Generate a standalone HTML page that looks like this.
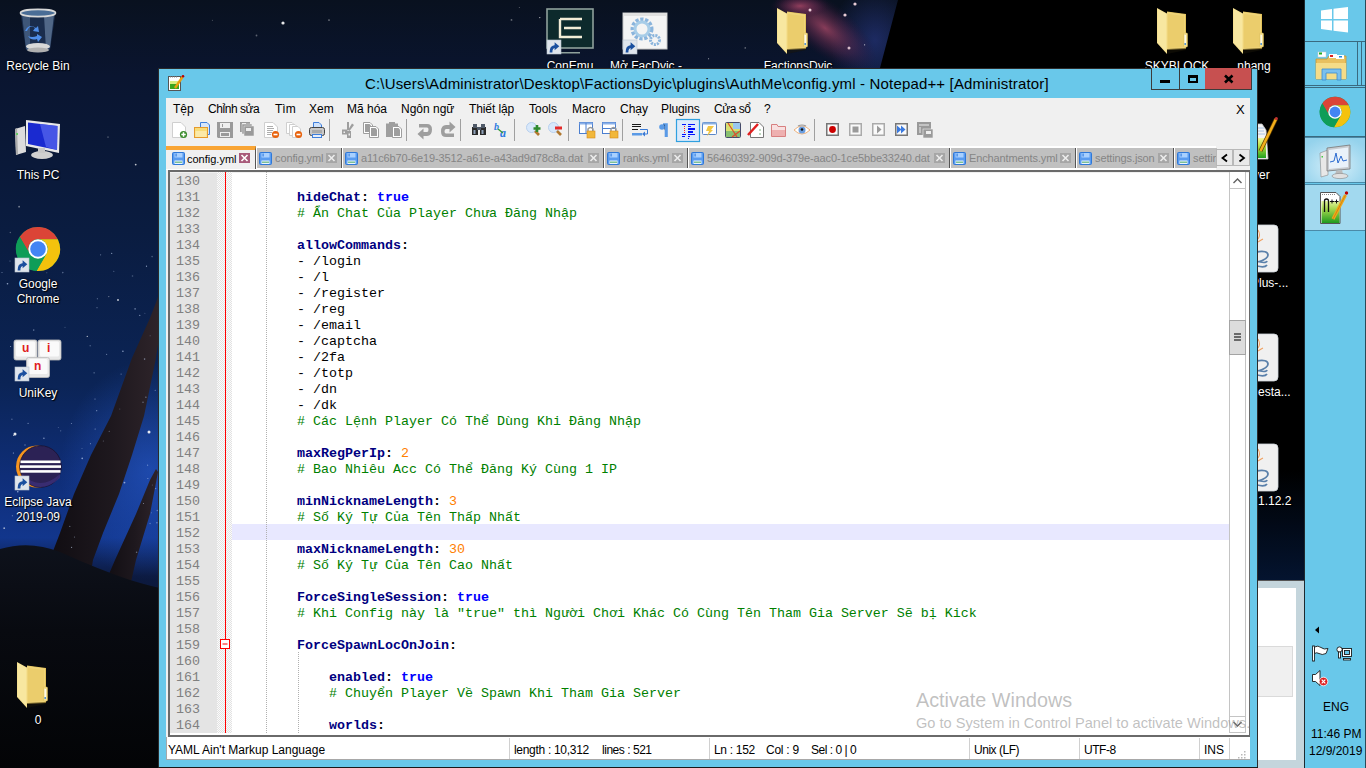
<!DOCTYPE html><html><head><meta charset="utf-8"><title>Notepad++</title><style>
*{box-sizing:border-box}
html,body{margin:0;padding:0}
body{width:1366px;height:768px;overflow:hidden;position:relative;background:#050a14;font-family:"Liberation Sans",sans-serif}
svg{position:absolute;left:0;top:0;overflow:visible}
.lbl{position:absolute;color:#fff;font-size:12px;line-height:15px;text-align:center;text-shadow:0 0 2px #000,1px 1px 1px #000;white-space:pre}
.mn{position:absolute;top:102px;font-size:12px;line-height:15px;color:#000;white-space:pre}
.ln{position:absolute;left:170px;width:47px;height:16px;font-family:"Liberation Mono",monospace;font-size:13.33px;line-height:16px;color:#808080;padding-left:6px;padding-top:2px;white-space:pre}
.cd{position:absolute;left:233px;height:16px;font-family:"Liberation Mono",monospace;font-size:13.33px;line-height:16px;color:#000;padding-top:2px;white-space:pre}
.k{color:#000080;font-weight:bold}
.o{color:#000;font-weight:bold}
.t{color:#0000ff;font-weight:bold}
.c{color:#008000}
.n{color:#ff8000}
.tab{position:absolute;top:148px;height:20px;background:#c0c0c0;border-right:1px solid #555;overflow:hidden}
.tabt{position:absolute;top:3px;font-size:11px;line-height:14px;color:#858585;white-space:pre;letter-spacing:-0.12px}
.sb{position:absolute;top:743px;font-size:12px;line-height:15px;color:#000;white-space:pre}
.sbd{position:absolute;top:738px;width:1px;height:21px;background:#d0d0d0}

</style></head><body>
<svg width="1366" height="768" viewBox="0 0 1366 768"><defs><linearGradient id="sky" x1="0" y1="0" x2="0" y2="768" gradientUnits="userSpaceOnUse"><stop offset="0" stop-color="#09111f"/><stop offset="0.1" stop-color="#0a1530"/><stop offset="0.3" stop-color="#0a1c40"/><stop offset="0.5" stop-color="#0b2456"/><stop offset="0.62" stop-color="#0f2e78"/><stop offset="0.7" stop-color="#12368c"/><stop offset="0.75" stop-color="#0c1a40"/><stop offset="1" stop-color="#04060a"/></linearGradient><radialGradient id="glow" cx="0.5" cy="0.5" r="0.5"><stop offset="0" stop-color="#2a60d8" stop-opacity="0.55"/><stop offset="1" stop-color="#2a60d8" stop-opacity="0"/></radialGradient><radialGradient id="neb" cx="0.5" cy="0.5" r="0.5"><stop offset="0" stop-color="#b04a6a" stop-opacity="0.75"/><stop offset="0.6" stop-color="#6a2a50" stop-opacity="0.35"/><stop offset="1" stop-color="#301030" stop-opacity="0"/></radialGradient><linearGradient id="rock" x1="0" y1="0" x2="1" y2="0"><stop offset="0" stop-color="#0e0b10"/><stop offset="0.6" stop-color="#1e181e"/><stop offset="1" stop-color="#2e242a"/></linearGradient><linearGradient id="gnd" x1="0" y1="540" x2="0" y2="768" gradientUnits="userSpaceOnUse"><stop offset="0" stop-color="#0e121c"/><stop offset="0.4" stop-color="#080a10"/><stop offset="1" stop-color="#030406"/></linearGradient></defs><rect x="0" y="0" width="1366" height="768" fill="url(#sky)"/><ellipse cx="150" cy="470" rx="90" ry="110" fill="url(#glow)"/><radialGradient id="bh" cx="0.5" cy="0.5" r="0.5"><stop offset="0" stop-color="#2a3a88" stop-opacity="0.6"/><stop offset="1" stop-color="#2a3a88" stop-opacity="0"/></radialGradient><ellipse cx="875" cy="40" rx="45" ry="55" fill="url(#bh)"/><ellipse cx="825" cy="28" rx="62" ry="26" transform="rotate(38 825 28)" fill="url(#neb)"/><ellipse cx="800" cy="6" rx="30" ry="12" fill="url(#neb)"/><path d="M898 0 L1366 0 L1366 768 L878 768 L878 68 L880 68 Z" fill="#000"/><linearGradient id="nv" x1="0" y1="0" x2="0" y2="1"><stop offset="0" stop-color="#000"/><stop offset="1" stop-color="#041430"/></linearGradient><rect x="1256" y="470" width="50" height="112" fill="url(#nv)"/><path d="M40 585 L60 533 L74 494 L91 455 L111 416 L132 358 L150 318 L157 300 L160 290 L160 330 L156 358 L144 416 L132 455 L119 494 L103 533 L93 560 L88 590 Z" fill="url(#rock)"/><path d="M100 595 L115 560 L136 514 L150 480 L156 469 L158 472 L150 514 L136 560 L128 595 Z" fill="url(#rock)"/><path d="M0 549 Q30 540 60 552 Q100 570 130 580 Q150 586 160 588 L160 768 L0 768 Z" fill="url(#gnd)"/><circle cx="563.1" cy="36.7" r="0.5" fill="#fff" opacity="0.75"/><circle cx="13.6" cy="435.3" r="0.6" fill="#fff" opacity="0.68"/><circle cx="27.9" cy="484.7" r="0.9" fill="#fff" opacity="0.60"/><circle cx="329.0" cy="20.1" r="0.9" fill="#fff" opacity="0.41"/><circle cx="256.5" cy="35.5" r="0.9" fill="#fff" opacity="0.34"/><circle cx="135.7" cy="164.6" r="0.9" fill="#fff" opacity="0.74"/><circle cx="39.8" cy="344.1" r="0.5" fill="#fff" opacity="0.49"/><circle cx="212.4" cy="20.2" r="0.5" fill="#fff" opacity="0.34"/><circle cx="539.8" cy="17.6" r="0.6" fill="#fff" opacity="0.79"/><circle cx="124.5" cy="482.6" r="0.9" fill="#fff" opacity="0.53"/><circle cx="10.3" cy="232.5" r="0.7" fill="#fff" opacity="0.31"/><circle cx="54.1" cy="351.3" r="0.9" fill="#fff" opacity="0.48"/><circle cx="19.1" cy="206.7" r="0.9" fill="#fff" opacity="0.45"/><circle cx="708.6" cy="58.7" r="0.5" fill="#fff" opacity="0.79"/><circle cx="87.3" cy="336.4" r="0.7" fill="#fff" opacity="0.64"/><circle cx="864.6" cy="44.8" r="0.6" fill="#fff" opacity="0.74"/><circle cx="108.8" cy="296.6" r="0.6" fill="#fff" opacity="0.46"/><circle cx="745.2" cy="47.9" r="0.7" fill="#fff" opacity="0.59"/><circle cx="511.5" cy="19.9" r="0.9" fill="#fff" opacity="0.38"/><circle cx="4.2" cy="528.2" r="0.9" fill="#fff" opacity="0.58"/><circle cx="29.1" cy="255.7" r="0.7" fill="#fff" opacity="0.57"/><circle cx="108.0" cy="136.9" r="0.5" fill="#fff" opacity="0.75"/><circle cx="519.3" cy="7.4" r="0.5" fill="#fff" opacity="0.39"/><circle cx="283" cy="23" r="1.6" fill="#fff" opacity="0.9"/><circle cx="71.5" cy="423.5" r="0.6" fill="#cfe0ff" opacity="0.48"/><circle cx="135.1" cy="308.9" r="0.8" fill="#cfe0ff" opacity="0.49"/><circle cx="97.0" cy="307.7" r="0.6" fill="#cfe0ff" opacity="0.42"/><circle cx="14.3" cy="501.0" r="0.8" fill="#cfe0ff" opacity="0.55"/><circle cx="94.1" cy="372.8" r="0.6" fill="#cfe0ff" opacity="0.56"/><circle cx="97.3" cy="298.8" r="0.5" fill="#cfe0ff" opacity="0.63"/><circle cx="10.0" cy="261.1" r="0.5" fill="#cfe0ff" opacity="0.54"/><circle cx="122.9" cy="351.2" r="0.8" fill="#cfe0ff" opacity="0.64"/><circle cx="82.0" cy="448.5" r="0.6" fill="#cfe0ff" opacity="0.30"/><circle cx="13.4" cy="453.0" r="0.6" fill="#cfe0ff" opacity="0.70"/><circle cx="157.3" cy="510.5" r="0.8" fill="#cfe0ff" opacity="0.40"/><circle cx="119.8" cy="409.0" r="0.5" fill="#cfe0ff" opacity="0.33"/><circle cx="121.1" cy="374.1" r="0.6" fill="#cfe0ff" opacity="0.45"/><circle cx="151.4" cy="512.7" r="0.5" fill="#cfe0ff" opacity="0.39"/><circle cx="146.5" cy="266.2" r="0.6" fill="#cfe0ff" opacity="0.69"/><circle cx="62.8" cy="272.6" r="0.8" fill="#cfe0ff" opacity="0.38"/><circle cx="106.6" cy="354.4" r="0.6" fill="#cfe0ff" opacity="0.43"/><circle cx="152.3" cy="485.0" r="0.5" fill="#cfe0ff" opacity="0.35"/><circle cx="111.7" cy="253.4" r="0.6" fill="#cfe0ff" opacity="0.62"/><circle cx="28.1" cy="423.4" r="0.6" fill="#cfe0ff" opacity="0.50"/><circle cx="155.7" cy="488.6" r="0.6" fill="#cfe0ff" opacity="0.56"/><circle cx="18.4" cy="380.4" r="0.5" fill="#cfe0ff" opacity="0.30"/><circle cx="136.6" cy="552.2" r="0.8" fill="#cfe0ff" opacity="0.42"/><circle cx="139.8" cy="315.3" r="0.6" fill="#cfe0ff" opacity="0.70"/><circle cx="95.1" cy="428.9" r="0.5" fill="#cfe0ff" opacity="0.70"/><circle cx="33.7" cy="330.1" r="0.8" fill="#cfe0ff" opacity="0.43"/><circle cx="46.8" cy="272.8" r="0.5" fill="#cfe0ff" opacity="0.38"/><circle cx="100.6" cy="254.8" r="0.6" fill="#cfe0ff" opacity="0.45"/><circle cx="71.6" cy="547.3" r="0.6" fill="#cfe0ff" opacity="0.63"/><circle cx="21.4" cy="369.7" r="0.8" fill="#cfe0ff" opacity="0.36"/><circle cx="143.5" cy="503.5" r="0.5" fill="#cfe0ff" opacity="0.59"/><circle cx="25.0" cy="445.0" r="0.8" fill="#cfe0ff" opacity="0.38"/><circle cx="150.1" cy="523.5" r="0.8" fill="#cfe0ff" opacity="0.33"/><circle cx="7.5" cy="283.8" r="0.8" fill="#cfe0ff" opacity="0.69"/><circle cx="37.7" cy="468.4" r="0.6" fill="#cfe0ff" opacity="0.47"/><circle cx="143.0" cy="402.2" r="0.8" fill="#cfe0ff" opacity="0.37"/><circle cx="113.8" cy="271.3" r="0.5" fill="#cfe0ff" opacity="0.49"/><circle cx="103.3" cy="440.9" r="0.5" fill="#cfe0ff" opacity="0.41"/><circle cx="144.9" cy="313.2" r="0.5" fill="#cfe0ff" opacity="0.33"/><circle cx="65.0" cy="327.2" r="0.5" fill="#cfe0ff" opacity="0.37"/><circle cx="58.3" cy="427.4" r="0.5" fill="#cfe0ff" opacity="0.34"/><circle cx="21.9" cy="389.6" r="0.6" fill="#cfe0ff" opacity="0.56"/><circle cx="109.2" cy="431.2" r="0.5" fill="#cfe0ff" opacity="0.54"/><circle cx="145.9" cy="397.2" r="0.6" fill="#cfe0ff" opacity="0.58"/><circle cx="152.1" cy="256.6" r="0.8" fill="#cfe0ff" opacity="0.33"/><circle cx="10.6" cy="346.4" r="0.5" fill="#cfe0ff" opacity="0.70"/><circle cx="11.9" cy="419.3" r="0.8" fill="#cfe0ff" opacity="0.32"/><circle cx="147.9" cy="478.5" r="0.5" fill="#cfe0ff" opacity="0.62"/><circle cx="144.6" cy="359.1" r="0.8" fill="#cfe0ff" opacity="0.49"/><circle cx="12.3" cy="515.8" r="0.5" fill="#cfe0ff" opacity="0.65"/><circle cx="90.5" cy="443.7" r="0.6" fill="#cfe0ff" opacity="0.45"/><circle cx="2.0" cy="272.4" r="0.5" fill="#cfe0ff" opacity="0.56"/><circle cx="156.9" cy="522.7" r="0.8" fill="#cfe0ff" opacity="0.43"/><circle cx="147.6" cy="465.2" r="0.6" fill="#cfe0ff" opacity="0.48"/><circle cx="132.5" cy="276.0" r="0.8" fill="#cfe0ff" opacity="0.31"/><circle cx="95.0" cy="399.1" r="0.5" fill="#cfe0ff" opacity="0.68"/><circle cx="17.8" cy="491.8" r="0.8" fill="#cfe0ff" opacity="0.67"/><circle cx="40.4" cy="253.5" r="0.6" fill="#cfe0ff" opacity="0.36"/><circle cx="96.7" cy="410.7" r="0.6" fill="#cfe0ff" opacity="0.56"/><circle cx="69.8" cy="526.4" r="0.6" fill="#cfe0ff" opacity="0.46"/><circle cx="39.6" cy="446.6" r="0.5" fill="#cfe0ff" opacity="0.65"/><circle cx="60.7" cy="430.8" r="0.6" fill="#cfe0ff" opacity="0.38"/><circle cx="21.3" cy="358.7" r="0.5" fill="#cfe0ff" opacity="0.58"/><circle cx="150.1" cy="335.8" r="0.5" fill="#cfe0ff" opacity="0.35"/><circle cx="74.5" cy="537.0" r="0.6" fill="#cfe0ff" opacity="0.45"/><circle cx="82.2" cy="458.4" r="0.8" fill="#cfe0ff" opacity="0.64"/><circle cx="155.2" cy="390.3" r="0.5" fill="#cfe0ff" opacity="0.63"/><circle cx="43.9" cy="438.3" r="0.8" fill="#cfe0ff" opacity="0.58"/><circle cx="90.2" cy="345.8" r="0.8" fill="#cfe0ff" opacity="0.31"/><circle cx="21.5" cy="391.0" r="0.5" fill="#cfe0ff" opacity="0.61"/><circle cx="15" cy="434" r="1.5" fill="#fff" opacity="0.9"/><circle cx="149" cy="432" r="1.5" fill="#fff" opacity="0.9"/><circle cx="118" cy="300" r="0.9" fill="#fff" opacity="0.8"/><circle cx="810" cy="10" r="1.5" fill="#ffe0e8" opacity="0.9"/><circle cx="855" cy="4" r="1.6" fill="#ffe0e8" opacity="0.9"/><circle cx="845" cy="15" r="1.6" fill="#ffe0e8" opacity="0.9"/><circle cx="849" cy="48" r="1.5" fill="#ffe0e8" opacity="0.8"/></svg>
<svg width="1366" height="768" viewBox="0 0 1366 768"><g><path d="M20.5 13 L55.5 13 L50 50 Q38 55 26 50 Z" fill="#1c3050" opacity="0.92"/><path d="M22 14 L30 14 L30 50 Q28 50 26 49 Z" fill="#6a8ab0" opacity="0.45"/><path d="M44 16 L54 15 L50 48 L46 49 Z" fill="#7d98b8" opacity="0.55"/><ellipse cx="38" cy="13" rx="17.5" ry="3.6" fill="#4a6d96" stroke="#d8d8d8" stroke-width="1.6"/><ellipse cx="38" cy="46.5" rx="12" ry="3.5" fill="#d8d8d8"/><ellipse cx="38" cy="50" rx="11" ry="2.5" fill="#b0b0b0"/><path d="M27 31 q3 -7 8 -3 l-2 3 l6 1 l-1 -6 l-2 2 q-7 -5 -11 3z M28 36 q3 5 9 3 l1 3 l4 -5 l-5 -3 v2 q-5 2 -9 0z" fill="#4f8ee8"/></g><g><path d="M15 129 L25 126 L26 152 L16 155 Z" fill="#dcdcdc"/><path d="M15 129 L17 128 L18 154 L16 155 Z" fill="#aaa"/><rect x="16" y="133" width="2" height="2" fill="#6c6"/><path d="M26 120 L60 124 L59 153 L26 146 Z" fill="#e8e8e8"/><path d="M28 122.5 L57.5 126 L57 150 L28 144 Z" fill="#1a2ad0"/><path d="M40 124 L57.5 126 L57 150 L46 147 Z" fill="#5a6af0" opacity="0.7"/><ellipse cx="42" cy="155" rx="11" ry="4" fill="#d0d0d0"/><rect x="38" y="148" width="7" height="5" fill="#c8c8c8"/></g><circle cx="38" cy="249" r="22" fill="#0f9d58"/><path d="M38.00,239.32 L57.76,239.32 A22,22 0 0 0 19.74,236.73 L29.62,253.84 A9.68,9.68 0 0 1 38.00,239.32 Z" fill="#db4437"/><path d="M38.00,239.32 L57.76,239.32 A22,22 0 0 0 19.74,236.73 L29.62,253.84 A9.68,9.68 0 0 1 38.00,239.32 Z" fill="#f4c20d" transform="rotate(120 38 249)"/><path d="M38.00,239.32 L57.76,239.32 A22,22 0 0 0 19.74,236.73 L29.62,253.84 A9.68,9.68 0 0 1 38.00,239.32 Z" fill="#0f9d58" transform="rotate(240 38 249)"/><circle cx="38" cy="249" r="9.68" fill="#fff"/><circle cx="38" cy="249" r="7.81" fill="#4285f4"/><g transform="translate(15,258)"><rect x="0" y="0" width="14" height="14" fill="#dfe5ec" stroke="#b8c4d0" stroke-width="0.6"/><path d="M4 12.5 C3.8 8.5 5.5 6.5 8.5 6.3" stroke="#1a4f9e" stroke-width="2.8" fill="none"/><path d="M7.6 2.3 L12.3 6.3 L7.6 10.3 Z" fill="#1a4f9e"/></g><rect x="14" y="340" width="23" height="20" rx="2" fill="#e8e8e8" stroke="#bdbdbd" stroke-width="0.8"/><rect x="16" y="341.5" width="19" height="15" rx="1.5" fill="#fafafa"/><text x="22" y="352" font-family="Liberation Sans" font-weight="bold" font-size="12" fill="#e02020">u</text><rect x="38" y="340" width="23" height="20" rx="2" fill="#e8e8e8" stroke="#bdbdbd" stroke-width="0.8"/><rect x="40" y="341.5" width="19" height="15" rx="1.5" fill="#fafafa"/><text x="47" y="352" font-family="Liberation Sans" font-weight="bold" font-size="12" fill="#e02020">i</text><rect x="26.5" y="357.5" width="23" height="20" rx="2" fill="#e8e8e8" stroke="#bdbdbd" stroke-width="0.8"/><rect x="28.5" y="359.0" width="19" height="15" rx="1.5" fill="#fafafa"/><text x="34" y="370" font-family="Liberation Sans" font-weight="bold" font-size="12" fill="#e02020">n</text><g transform="translate(15,367)"><rect x="0" y="0" width="14" height="14" fill="#dfe5ec" stroke="#b8c4d0" stroke-width="0.6"/><path d="M4 12.5 C3.8 8.5 5.5 6.5 8.5 6.3" stroke="#1a4f9e" stroke-width="2.8" fill="none"/><path d="M7.6 2.3 L12.3 6.3 L7.6 10.3 Z" fill="#1a4f9e"/></g><circle cx="37" cy="466.5" r="21" fill="#f7941e"/><circle cx="40.5" cy="466.5" r="20.8" fill="#2c2255" stroke="#1a1030" stroke-width="0.8"/><path d="M22 474 Q40 492 60 474 L60 478 Q40 496 22 478Z" fill="#3d3078" opacity="0.8"/><rect x="20.5" y="460.5" width="40" height="2.6" fill="#fff"/><rect x="20" y="465.3" width="41" height="2.6" fill="#fff"/><rect x="20.5" y="470.1" width="40" height="2.6" fill="#fff"/><g transform="translate(15,476)"><rect x="0" y="0" width="14" height="14" fill="#dfe5ec" stroke="#b8c4d0" stroke-width="0.6"/><path d="M4 12.5 C3.8 8.5 5.5 6.5 8.5 6.3" stroke="#1a4f9e" stroke-width="2.8" fill="none"/><path d="M7.6 2.3 L12.3 6.3 L7.6 10.3 Z" fill="#1a4f9e"/></g><g transform="translate(17,662) scale(1.0)"><path d="M10 3.5 L29 6 L29 41 L10 42 Z" fill="#e3c25a"/><path d="M10 4 L28 6.5 L28 40 L10 41 Z" fill="#efd47a"/><path d="M11 6 L27 8 L27 39 L11 40 Z" fill="#e8c862" opacity="0.6"/><rect x="26.5" y="25" width="4" height="14" rx="1" fill="#f4df92" stroke="#d8b850" stroke-width="0.5"/><rect x="27.6" y="27" width="1.2" height="8" fill="#fff"/><circle cx="28.2" cy="36" r="0.9" fill="#3a8ae0"/><path d="M0 0 L10 5.5 L10 46 L0 35 Z" fill="#f6e08e"/><path d="M0.8 1.2 L9.2 5.8 L9.2 44 L0.8 34.5 Z" fill="#f9e9a8" opacity="0.7"/><path d="M10 41 L29 40 L29 42 L10 46 Z" fill="#1a1608" opacity="0.5"/></g><rect x="547" y="9" width="46" height="39" fill="#0d2a2c" stroke="#8fa19c" stroke-width="1.6"/><path d="M560 19 H582 M560 19 V37 H582 M564 28 H581" stroke="#f2ecd6" stroke-width="2.4" fill="none"/><rect x="560" y="52" width="20" height="1.5" fill="#8fa19c"/><g transform="translate(547,40)"><rect x="0" y="0" width="14" height="14" fill="#dfe5ec" stroke="#b8c4d0" stroke-width="0.6"/><path d="M4 12.5 C3.8 8.5 5.5 6.5 8.5 6.3" stroke="#1a4f9e" stroke-width="2.8" fill="none"/><path d="M7.6 2.3 L12.3 6.3 L7.6 10.3 Z" fill="#1a4f9e"/></g><rect x="623" y="13" width="44" height="36" fill="#f4f4f4" stroke="#c8c8c8"/><rect x="623" y="13" width="44" height="3" fill="#e0e0e0"/><circle cx="642" cy="29" r="9" fill="none" stroke="#8ab4dc" stroke-width="5" stroke-dasharray="3 1.5"/><circle cx="642" cy="29" r="7" fill="none" stroke="#a8cde8" stroke-width="3"/><circle cx="655" cy="40" r="4.5" fill="none" stroke="#8ab4dc" stroke-width="3" stroke-dasharray="2 1"/><g transform="translate(623,40)"><rect x="0" y="0" width="14" height="14" fill="#dfe5ec" stroke="#b8c4d0" stroke-width="0.6"/><path d="M4 12.5 C3.8 8.5 5.5 6.5 8.5 6.3" stroke="#1a4f9e" stroke-width="2.8" fill="none"/><path d="M7.6 2.3 L12.3 6.3 L7.6 10.3 Z" fill="#1a4f9e"/></g><g transform="translate(777,8) scale(1.0)"><path d="M10 3.5 L29 6 L29 41 L10 42 Z" fill="#e3c25a"/><path d="M10 4 L28 6.5 L28 40 L10 41 Z" fill="#efd47a"/><path d="M11 6 L27 8 L27 39 L11 40 Z" fill="#e8c862" opacity="0.6"/><rect x="26.5" y="25" width="4" height="14" rx="1" fill="#f4df92" stroke="#d8b850" stroke-width="0.5"/><rect x="27.6" y="27" width="1.2" height="8" fill="#fff"/><circle cx="28.2" cy="36" r="0.9" fill="#3a8ae0"/><path d="M0 0 L10 5.5 L10 46 L0 35 Z" fill="#f6e08e"/><path d="M0.8 1.2 L9.2 5.8 L9.2 44 L0.8 34.5 Z" fill="#f9e9a8" opacity="0.7"/><path d="M10 41 L29 40 L29 42 L10 46 Z" fill="#1a1608" opacity="0.5"/></g><g transform="translate(1157,8) scale(1.0)"><path d="M10 3.5 L29 6 L29 41 L10 42 Z" fill="#e3c25a"/><path d="M10 4 L28 6.5 L28 40 L10 41 Z" fill="#efd47a"/><path d="M11 6 L27 8 L27 39 L11 40 Z" fill="#e8c862" opacity="0.6"/><rect x="26.5" y="25" width="4" height="14" rx="1" fill="#f4df92" stroke="#d8b850" stroke-width="0.5"/><rect x="27.6" y="27" width="1.2" height="8" fill="#fff"/><circle cx="28.2" cy="36" r="0.9" fill="#3a8ae0"/><path d="M0 0 L10 5.5 L10 46 L0 35 Z" fill="#f6e08e"/><path d="M0.8 1.2 L9.2 5.8 L9.2 44 L0.8 34.5 Z" fill="#f9e9a8" opacity="0.7"/><path d="M10 41 L29 40 L29 42 L10 46 Z" fill="#1a1608" opacity="0.5"/></g><g transform="translate(1233,8) scale(1.0)"><path d="M10 3.5 L29 6 L29 41 L10 42 Z" fill="#e3c25a"/><path d="M10 4 L28 6.5 L28 40 L10 41 Z" fill="#efd47a"/><path d="M11 6 L27 8 L27 39 L11 40 Z" fill="#e8c862" opacity="0.6"/><rect x="26.5" y="25" width="4" height="14" rx="1" fill="#f4df92" stroke="#d8b850" stroke-width="0.5"/><rect x="27.6" y="27" width="1.2" height="8" fill="#fff"/><circle cx="28.2" cy="36" r="0.9" fill="#3a8ae0"/><path d="M0 0 L10 5.5 L10 46 L0 35 Z" fill="#f6e08e"/><path d="M0.8 1.2 L9.2 5.8 L9.2 44 L0.8 34.5 Z" fill="#f9e9a8" opacity="0.7"/><path d="M10 41 L29 40 L29 42 L10 46 Z" fill="#1a1608" opacity="0.5"/></g><rect x="1240" y="225" width="38" height="47" rx="4" fill="#f0f0f0" stroke="#cfd6dc" stroke-width="0.8"/><path d="M1256 252 q12 -2 12 3 q0 4 -10 7 M1256 261 q10 3 11 0 M1257 266 q8 2 10 -1" stroke="#5a80aa" stroke-width="1.8" fill="none"/><path d="M1258 230 q3 5 0 9 M1258 242 q3 -2 5 -3" stroke="#f0a060" stroke-width="1.1" fill="none"/><rect x="1240" y="334" width="38" height="47" rx="4" fill="#f0f0f0" stroke="#cfd6dc" stroke-width="0.8"/><path d="M1256 361 q12 -2 12 3 q0 4 -10 7 M1256 370 q10 3 11 0 M1257 375 q8 2 10 -1" stroke="#5a80aa" stroke-width="1.8" fill="none"/><path d="M1258 339 q3 5 0 9 M1258 351 q3 -2 5 -3" stroke="#f0a060" stroke-width="1.1" fill="none"/><rect x="1240" y="444" width="38" height="47" rx="4" fill="#f0f0f0" stroke="#cfd6dc" stroke-width="0.8"/><path d="M1256 471 q12 -2 12 3 q0 4 -10 7 M1256 480 q10 3 11 0 M1257 485 q8 2 10 -1" stroke="#5a80aa" stroke-width="1.8" fill="none"/><path d="M1258 449 q3 5 0 9 M1258 461 q3 -2 5 -3" stroke="#f0a060" stroke-width="1.1" fill="none"/><defs><linearGradient id="npd" x1="0" y1="0" x2="0" y2="1"><stop offset="0" stop-color="#f4f8a0"/><stop offset="0.4" stop-color="#b8e040"/><stop offset="1" stop-color="#20a020"/></linearGradient></defs><path d="M1250 124 L1262 124 L1266 130 L1268 159 L1250 159 Z" fill="#f4f4f4" stroke="#c8c8c8" stroke-width="0.8"/><path d="M1258 128 H1264 M1258 131 H1264 M1258 134 H1265" stroke="#9ab8e0" stroke-width="0.8"/><rect x="1252" y="138" width="14" height="20" fill="url(#npd)"/><path d="M1260.5 151 L1276 119" stroke="#5a3a00" stroke-width="4"/><path d="M1260.5 151 L1276 119" stroke="#f2ae1a" stroke-width="2.6"/><circle cx="1276.3" cy="118.5" r="1.6" fill="#c03030"/></svg>
<div class="lbl" style="left:-12px;top:59px;width:100px">Recycle Bin</div>
<div class="lbl" style="left:-12px;top:168px;width:100px">This PC</div>
<div class="lbl" style="left:-12px;top:277px;width:100px">Google
Chrome</div>
<div class="lbl" style="left:-12px;top:386px;width:100px">UniKey</div>
<div class="lbl" style="left:-12px;top:495px;width:100px">Eclipse Java
2019-09</div>
<div class="lbl" style="left:-12px;top:713px;width:100px">0</div>
<div class="lbl" style="left:520px;top:59px;width:100px">ConEmu</div>
<div class="lbl" style="left:596px;top:59px;width:100px">Mở FacDyic -</div>
<div class="lbl" style="left:748px;top:59px;width:100px">FactionsDyic</div>
<div class="lbl" style="left:1127px;top:59px;width:100px">SKYBLOCK</div>
<div class="lbl" style="left:1204px;top:59px;width:100px">nhang</div>
<div class="lbl" style="left:1253px;top:168px;text-align:left">ver</div>
<div class="lbl" style="left:1251px;top:276px;text-align:left">Plus-...</div>
<div class="lbl" style="left:1258px;top:385px;text-align:left">esta...</div>
<div class="lbl" style="left:1258px;top:494px;text-align:left">1.12.2</div>
<div style="position:absolute;left:158px;top:68px;width:1100px;height:700px;background:#69c8ea;border:1px solid #2b2b2b;border-bottom:0"></div>
<div style="position:absolute;left:158px;top:767px;width:1100px;height:1px;background:#1a1a1a"></div>
<div style="position:absolute;left:365px;top:75px;white-space:pre;font-size:15px;line-height:18px;color:#000;letter-spacing:0.165px">C:\Users\Administrator\Desktop\FactionsDyic\plugins\AuthMe\config.yml - Notepad++ [Administrator]</div>
<div style="position:absolute;left:1151px;top:68px;width:29px;height:22px;border:1px solid #3c3c3c;border-top:0;background:#69c8ea"><div style="position:absolute;left:8px;top:12px;width:10px;height:3px;background:#000"></div></div>
<div style="position:absolute;left:1180px;top:68px;width:26px;height:22px;border:1px solid #3c3c3c;border-top:0;border-left:0;background:#69c8ea"><div style="position:absolute;left:8px;top:7px;width:10px;height:8px;border:2px solid #000;border-top-width:3px"></div></div>
<div style="position:absolute;left:1205px;top:68px;width:47px;height:22px;background:#c75050;border-bottom:1px solid #3c3c3c;border-right:1px solid #3c3c3c"></div>
<div style="position:absolute;left:166px;top:98px;width:1084px;height:662px;background:#f0f0f0"></div>
<div class="mn" style="left:173px;letter-spacing:0px">Tệp</div>
<div class="mn" style="left:208px;letter-spacing:-0.45px">Chỉnh sửa</div>
<div class="mn" style="left:275px;letter-spacing:0px">Tìm</div>
<div class="mn" style="left:309px;letter-spacing:0px">Xem</div>
<div class="mn" style="left:347px;letter-spacing:0px">Mã hóa</div>
<div class="mn" style="left:401px;letter-spacing:0px">Ngôn ngữ</div>
<div class="mn" style="left:469px;letter-spacing:-0.1px">Thiết lập</div>
<div class="mn" style="left:529px;letter-spacing:0px">Tools</div>
<div class="mn" style="left:572px;letter-spacing:0px">Macro</div>
<div class="mn" style="left:620px;letter-spacing:0px">Chạy</div>
<div class="mn" style="left:661px;letter-spacing:-0.1px">Plugins</div>
<div class="mn" style="left:714px;letter-spacing:-0.5px">Cửa sổ</div>
<div class="mn" style="left:764px;letter-spacing:0px">?</div>
<div style="position:absolute;left:1236px;top:102px;white-space:pre;font-size:13px;line-height:15px;color:#000">X</div>
<div style="position:absolute;left:166px;top:146px;width:1050px;height:24px;background:#fff"></div>
<div style="position:absolute;left:166px;top:146px;width:90px;height:23px;background:#f0f0f0;border-top:4px solid #f9a535;border-right:1px solid #555"></div>
<div style="position:absolute;left:187px;top:151px;white-space:pre;font-size:11px;line-height:14px;color:#000;top:152px">config.yml</div>
<div class="tab" style="left:257px;width:85px;"><div class="tabt" style="left:18px">config.yml</div></div>
<div class="tab" style="left:343px;width:261px;"><div class="tabt" style="left:18px">a11c6b70-6e19-3512-a61e-a43ad9d78c8a.dat</div></div>
<div class="tab" style="left:605px;width:83px;"><div class="tabt" style="left:18px">ranks.yml</div></div>
<div class="tab" style="left:689px;width:261px;"><div class="tabt" style="left:18px">56460392-909d-379e-aac0-1ce5bbe33240.dat</div></div>
<div class="tab" style="left:951px;width:125px;"><div class="tabt" style="left:18px">Enchantments.yml</div></div>
<div class="tab" style="left:1077px;width:97px;"><div class="tabt" style="left:18px">settings.json</div></div>
<div class="tab" style="left:1175px;width:42px;border-right:0"><div class="tabt" style="left:18px">settings.json</div></div>
<div style="position:absolute;left:1216px;top:149px;width:17px;height:17px;background:#e9e9e9;border:1px solid #b8b8b8"></div>
<div style="position:absolute;left:1233px;top:149px;width:17px;height:17px;background:#e9e9e9;border:1px solid #b8b8b8"></div>
<div style="position:absolute;left:168px;top:170px;width:1082px;height:567px;background:#fff;border-top:2px solid #6a6a6a;border-left:2px solid #6a6a6a;border-bottom:2px solid #6a6a6a;border-right:1px solid #6a6a6a"></div>
<div style="position:absolute;left:170px;top:172px;width:1079px;height:1px;background:#f0f0f0"></div>
<div style="position:absolute;left:170px;top:173px;width:47px;height:560px;background:#e4e4e4"></div>
<div style="position:absolute;left:217px;top:172px;width:15px;height:561px;background-color:#f4f4f4;background-image:repeating-conic-gradient(#e2e2e2 0% 25%, #fbfbfb 0% 50%);background-size:2px 2px"></div>
<div style="position:absolute;left:225px;top:172px;width:1px;height:561px;background:#ff0000"></div>
<div style="position:absolute;left:232px;top:524px;width:997px;height:16px;background:#e8e8ff"></div>
<div style="position:absolute;left:266px;top:172px;width:1px;height:561px;background-image:linear-gradient(180deg,#b0b0b0 50%,transparent 50%);background-size:1px 2px"></div>
<div style="position:absolute;left:298px;top:652px;width:1px;height:81px;background-image:linear-gradient(180deg,#b0b0b0 50%,transparent 50%);background-size:1px 2px"></div>
<div class="ln" style="top:172px">130</div>
<div class="ln" style="top:188px">131</div>
<div class="cd" style="top:188px">        <span class="k">hideChat</span><span class="o">:</span> <span class="t">true</span></div>
<div class="ln" style="top:204px">132</div>
<div class="cd" style="top:204px">        <span class="c"># Ẩn Chat Của Player Chưa Đăng Nhập</span></div>
<div class="ln" style="top:220px">133</div>
<div class="ln" style="top:236px">134</div>
<div class="cd" style="top:236px">        <span class="k">allowCommands</span><span class="o">:</span></div>
<div class="ln" style="top:252px">135</div>
<div class="cd" style="top:252px">        - /login</div>
<div class="ln" style="top:268px">136</div>
<div class="cd" style="top:268px">        - /l</div>
<div class="ln" style="top:284px">137</div>
<div class="cd" style="top:284px">        - /register</div>
<div class="ln" style="top:300px">138</div>
<div class="cd" style="top:300px">        - /reg</div>
<div class="ln" style="top:316px">139</div>
<div class="cd" style="top:316px">        - /email</div>
<div class="ln" style="top:332px">140</div>
<div class="cd" style="top:332px">        - /captcha</div>
<div class="ln" style="top:348px">141</div>
<div class="cd" style="top:348px">        - /2fa</div>
<div class="ln" style="top:364px">142</div>
<div class="cd" style="top:364px">        - /totp</div>
<div class="ln" style="top:380px">143</div>
<div class="cd" style="top:380px">        - /dn</div>
<div class="ln" style="top:396px">144</div>
<div class="cd" style="top:396px">        - /dk</div>
<div class="ln" style="top:412px">145</div>
<div class="cd" style="top:412px">        <span class="c"># Các Lệnh Player Có Thể Dùng Khi Đăng Nhập</span></div>
<div class="ln" style="top:428px">146</div>
<div class="ln" style="top:444px">147</div>
<div class="cd" style="top:444px">        <span class="k">maxRegPerIp</span><span class="o">:</span> <span class="n">2</span></div>
<div class="ln" style="top:460px">148</div>
<div class="cd" style="top:460px">        <span class="c"># Bao Nhiêu Acc Có Thể Đăng Ký Cùng 1 IP</span></div>
<div class="ln" style="top:476px">149</div>
<div class="ln" style="top:492px">150</div>
<div class="cd" style="top:492px">        <span class="k">minNicknameLength</span><span class="o">:</span> <span class="n">3</span></div>
<div class="ln" style="top:508px">151</div>
<div class="cd" style="top:508px">        <span class="c"># Số Ký Tự Của Tên Thấp Nhất</span></div>
<div class="ln" style="top:524px">152</div>
<div class="ln" style="top:540px">153</div>
<div class="cd" style="top:540px">        <span class="k">maxNicknameLength</span><span class="o">:</span> <span class="n">30</span></div>
<div class="ln" style="top:556px">154</div>
<div class="cd" style="top:556px">        <span class="c"># Số Ký Tự Của Tên Cao Nhất</span></div>
<div class="ln" style="top:572px">155</div>
<div class="ln" style="top:588px">156</div>
<div class="cd" style="top:588px">        <span class="k">ForceSingleSession</span><span class="o">:</span> <span class="t">true</span></div>
<div class="ln" style="top:604px">157</div>
<div class="cd" style="top:604px">        <span class="c"># Khi Config này là "true" thì Người Chơi Khác Có Cùng Tên Tham Gia Server Sẽ bị Kick</span></div>
<div class="ln" style="top:620px">158</div>
<div class="ln" style="top:636px">159</div>
<div class="cd" style="top:636px">        <span class="k">ForceSpawnLocOnJoin</span><span class="o">:</span></div>
<div class="ln" style="top:652px">160</div>
<div class="ln" style="top:668px">161</div>
<div class="cd" style="top:668px">            <span class="k">enabled</span><span class="o">:</span> <span class="t">true</span></div>
<div class="ln" style="top:684px">162</div>
<div class="cd" style="top:684px">            <span class="c"># Chuyển Player Về Spawn Khi Tham Gia Server</span></div>
<div class="ln" style="top:700px">163</div>
<div class="ln" style="top:716px">164</div>
<div class="cd" style="top:716px">            <span class="k">worlds</span><span class="o">:</span></div>
<div style="position:absolute;left:1229px;top:172px;width:17px;height:561px;background:#fff;border-left:1px solid #c4c4c4;border-right:1px solid #c4c4c4"></div>
<div style="position:absolute;left:1229px;top:188px;width:17px;height:1px;background:#c4c4c4"></div>
<div style="position:absolute;left:1229px;top:716px;width:17px;height:1px;background:#c4c4c4"></div>
<div style="position:absolute;left:1229px;top:320px;width:17px;height:35px;background:#dcdcdc;border:1px solid #a4a4a4"></div>
<div style="position:absolute;left:1234px;top:333px;width:7px;height:2px;background:#6a6a6a"></div>
<div style="position:absolute;left:1234px;top:336px;width:7px;height:2px;background:#6a6a6a"></div>
<div style="position:absolute;left:1234px;top:339px;width:7px;height:2px;background:#6a6a6a"></div>
<div style="position:absolute;left:1229px;top:732px;width:17px;height:1px;background:#c4c4c4"></div>
<div style="position:absolute;left:166px;top:737px;width:1084px;height:23px;background:#fff;border-bottom:1px solid #a8a8a8;border-left:1px solid #a8a8a8"></div>
<div class="sb" style="left:168px">YAML Ain't Markup Language</div>
<div class="sbd" style="left:509px"></div>
<div class="sbd" style="left:709px"></div>
<div class="sbd" style="left:969px"></div>
<div class="sbd" style="left:1079px"></div>
<div class="sbd" style="left:1199px"></div>
<div class="sbd" style="left:1229px"></div>
<div class="sb" style="left:514px;letter-spacing:-0.3px">length : 10,312</div>
<div class="sb" style="left:602px;letter-spacing:-0.47px">lines : 521</div>
<div class="sb" style="left:714px;letter-spacing:-0.3px">Ln : 152</div>
<div class="sb" style="left:766px;letter-spacing:-0.27px">Col : 9</div>
<div class="sb" style="left:811px;letter-spacing:-0.48px">Sel : 0 | 0</div>
<div class="sb" style="left:974px;letter-spacing:-0.47px">Unix (LF)</div>
<div class="sb" style="left:1084px;letter-spacing:-0.44px">UTF-8</div>
<div class="sb" style="left:1204px">INS</div>
<div style="position:absolute;left:1258px;top:580px;width:46px;height:188px;background:#c4d5dc;border-top:1px solid #555"></div>
<div style="position:absolute;left:1258px;top:588px;width:38px;height:172px;background:#fff"></div>
<div style="position:absolute;left:1258px;top:646px;width:35px;height:51px;background:#f0f0f0;border:1px solid #dadada;border-left:0"></div>
<div style="position:absolute;left:1304px;top:0px;width:62px;height:768px;background:#69c8ea;border-left:1px solid #1e2a30;border-right:1px solid #2a4a58"></div>
<div style="position:absolute;left:1305px;top:41px;width:60px;height:1px;background:#3a6a80"></div>
<div style="position:absolute;left:1305px;top:85px;width:60px;height:1px;background:#3a6a80"></div>
<div style="position:absolute;left:1305px;top:87px;width:60px;height:1px;background:#3a6a80"></div>
<div style="position:absolute;left:1305px;top:136px;width:60px;height:1px;background:#3a6a80"></div>
<div style="position:absolute;left:1305px;top:137px;width:60px;height:46px;background:radial-gradient(ellipse 40px 30px at 30px 28px,#d8f0fa,#a6daf0 70%,#94d2ec);border-top:1px solid #4a8aa8;border-bottom:1px solid #4a8aa8"></div>
<div style="position:absolute;left:1305px;top:184px;width:60px;height:47px;background:#a2d9ef;border-top:1px solid #4a8aa8;border-bottom:1px solid #4a8aa8"></div>
<div style="position:absolute;left:1357px;top:42px;width:1px;height:43px;background:#3a6a80"></div>
<div style="position:absolute;left:1361px;top:42px;width:1px;height:43px;background:#3a6a80"></div>
<div style="position:absolute;left:1323px;top:700px;white-space:pre;font-size:12px;line-height:15px;color:#000">ENG</div>
<div style="position:absolute;left:1311px;top:727px;white-space:pre;font-size:12px;line-height:15px;color:#000">11:46 PM</div>
<div style="position:absolute;left:1309px;top:744px;white-space:pre;font-size:12px;line-height:15px;color:#000">12/9/2019</div>
<svg width="1366" height="768" viewBox="0 0 1366 768"><g transform="translate(168,75)"><rect x="0.5" y="1.5" width="12" height="14" fill="#fff" stroke="#555"/><rect x="2" y="8" width="9" height="6" fill="#3aa520"/><rect x="2" y="6" width="9" height="3" fill="#d8ee80"/><path d="M2 2 H10" stroke="#888" stroke-dasharray="1 1"/><path d="M7 13 L14.5 2" stroke="#e8a010" stroke-width="2.4"/><circle cx="15" cy="1.3" r="1.3" fill="#b00"/></g><path d="M1225 75.5 L1232.5 82.5 M1232.5 75.5 L1225 82.5" stroke="#000" stroke-width="2.6"/><g transform="translate(172,122)"><path d="M0.5 0.5 H9 L13.5 5 V15.5 H0.5 Z" fill="#fff" stroke="#cfcfcf"/><circle cx="11.5" cy="12.5" r="3.6" fill="#3b8c2c"/><path d="M11.5 10.3 V14.7 M9.3 12.5 H13.7" stroke="#fff" stroke-width="1.5"/></g><g transform="translate(194,122)"><path d="M6.5 0.5 H13 L15.5 3 V12.5 H6.5 Z" fill="#d6e6fb" stroke="#3f7fdc"/><rect x="0.5" y="5.5" width="13" height="10" fill="#f7dc78" stroke="#e69a2c"/><rect x="1.5" y="9" width="11" height="6" fill="#fbe9a8"/></g><g transform="translate(217,122)"><path d="M0 0 H16 V16 H1 L0 15 Z" fill="#9a9a9a"/><rect x="3" y="1" width="10" height="5" fill="#eee"/><rect x="5" y="2" width="1" height="3" fill="#9a9a9a"/><rect x="3" y="10" width="10" height="5" fill="#eee"/><rect x="4" y="11" width="8" height="3" fill="#9a9a9a"/></g><g transform="translate(240,122)"><rect x="0" y="0" width="10" height="10" fill="#9a9a9a"/><rect x="2" y="2" width="10" height="10" fill="#9a9a9a" stroke="#f0f0f0" stroke-width="0.5"/><rect x="4" y="4" width="10" height="10" fill="#9a9a9a" stroke="#f0f0f0" stroke-width="0.5"/><rect x="6" y="6" width="5" height="3" fill="#eee"/><rect x="2" y="1" width="4" height="1" fill="#eee"/></g><g transform="translate(264,122)"><path d="M0.5 0.5 H9 L13.5 5 V15.5 H0.5 Z" fill="#fff" stroke="#cfcfcf"/><path d="M3 4.5 H9 M3 6.5 H10 M3 8.5 H9 M3 10.5 H8 M3 12.5 H7" stroke="#8a8a8a" stroke-width="0.7"/><circle cx="11.5" cy="12.5" r="3.6" fill="#e8620c"/><path d="M9.5 12.5 H13.5" stroke="#fff" stroke-width="1.6"/></g><g transform="translate(286,122)"><path d="M0.5 0.5 H6 L8 2.5 V11.5 H0.5 Z" fill="#fff" stroke="#cfcfcf"/><path d="M3.5 2.5 H9 L11 4.5 V13.5 H3.5 Z" fill="#fff" stroke="#cfcfcf"/><path d="M6.5 4.5 H12 L14.5 7 V15.5 H6.5 Z" fill="#fff" stroke="#cfcfcf"/><circle cx="12.5" cy="12.5" r="3.6" fill="#e8620c"/><path d="M10.5 12.5 H14.5" stroke="#fff" stroke-width="1.6"/></g><g transform="translate(309,122)"><path d="M4.5 0.5 H10 L12.5 3 V6 H4.5 Z" fill="#cfe2fb" stroke="#3f7fdc"/><rect x="0.5" y="5.5" width="15" height="8" rx="2" fill="#c8c8c8" stroke="#444"/><rect x="3" y="8" width="10" height="3" fill="#aaa"/><rect x="3.5" y="12.5" width="9" height="3" fill="#e8f0fb" stroke="#3f7fdc"/></g><g transform="translate(341,122)"><g fill="#9e9e9e"><rect x="6" y="0" width="2" height="8"/><path d="M11 1.5 L13 3 L8.5 9 L7 8 Z"/><rect x="1" y="7.5" width="5.5" height="5"/><rect x="6" y="9" width="4" height="7"/></g><rect x="2.5" y="9.5" width="1.5" height="1.5" fill="#f0f0f0"/><rect x="7.5" y="11.5" width="1.5" height="2" fill="#f0f0f0"/></g><g transform="translate(363,122)"><path d="M0.5 0.5 H7 L9.5 3 V11.5 H0.5 Z" fill="#fff" stroke="#9e9e9e"/><path d="M2 2 H6.5 L8 3.5 V10 H2 Z" fill="#9e9e9e"/><path d="M6.5 4.5 H13 L15.5 7 V15.5 H6.5 Z" fill="#fff" stroke="#9e9e9e"/><path d="M8 6 H12.5 L14 7.5 V14 H8 Z" fill="#9e9e9e"/></g><g transform="translate(386,122)"><path d="M0 1.5 H3 V0 H9 V1.5 H12 V15 H0 Z" fill="#9e9e9e"/><path d="M6.5 4.5 H13 L15.5 7 V15.5 H6.5 Z" fill="#fff" stroke="#9e9e9e"/><path d="M8 6 H12.5 L14 7.5 V14 H8 Z" fill="#9e9e9e"/></g><g transform="translate(417,122)"><path d="M2 2 H10 Q15 2 15 7.5 Q15 14 10 14 H6 V10 H10 Q11.5 10 11.5 7.5 Q11.5 5.5 10 5.5 H2 Z" fill="#9e9e9e"/><path d="M0.5 12 L6.5 6.5 V17.5 Z" fill="#9e9e9e"/></g><g transform="translate(440,122)"><g transform="rotate(180 8 8.5)"><path d="M2 2 H10 Q15 2 15 7.5 Q15 14 10 14 H6 V10 H10 Q11.5 10 11.5 7.5 Q11.5 5.5 10 5.5 H2 Z" fill="#9e9e9e"/><path d="M0.5 12 L6.5 6.5 V17.5 Z" fill="#9e9e9e"/></g></g><g transform="translate(472,122)"><rect x="0" y="5" width="6" height="8" fill="#2a2a2a"/><rect x="8" y="5" width="6" height="8" fill="#2a2a2a"/><rect x="1" y="2" width="4" height="4" fill="#505a68"/><rect x="9" y="2" width="4" height="4" fill="#505a68"/><rect x="5" y="5" width="4" height="3" fill="#505a68"/><rect x="1.5" y="8" width="2" height="4" fill="#8da0b8"/><rect x="9.5" y="8" width="2" height="4" fill="#8da0b8"/></g><g transform="translate(494,122)"><text x="0" y="8" font-family="Liberation Serif" font-style="italic" font-weight="bold" font-size="10" fill="#2f7be0">b</text><text x="6" y="15" font-family="Liberation Serif" font-style="italic" font-weight="bold" font-size="12" fill="#2f7be0">a</text><path d="M4 7 L9 11" stroke="#3a9a3a" stroke-width="1.5"/></g><g transform="translate(526,122)"><circle cx="5.5" cy="5.5" r="5" fill="#d8e8fb" stroke="#b8d0ee"/><path d="M9 9 L13 13" stroke="#b07830" stroke-width="2.6"/><path d="M11 3 V10 M7.5 6.5 H14.5" stroke="#2e8a2e" stroke-width="2.6"/></g><g transform="translate(548,122)"><circle cx="5.5" cy="5.5" r="5" fill="#d8e8fb" stroke="#b8d0ee"/><path d="M9 9 L13 13" stroke="#b07830" stroke-width="2.6"/><rect x="7" y="4.5" width="7" height="3" fill="#e42a2a"/></g><g transform="translate(579,122)"><rect x="0.5" y="0.5" width="13" height="11" fill="#fff" stroke="#4a7ed0"/><rect x="0.5" y="0.5" width="13" height="2" fill="#8ab0e8"/><path d="M7 1 V11" stroke="#4a7ed0"/><path d="M9 9 V7 Q11.5 4 14 7 V9" stroke="#9a9a9a" stroke-width="1.5" fill="none"/><rect x="8" y="9" width="8" height="7" fill="#f1b73a" stroke="#d88a1a" stroke-width="0.6"/></g><g transform="translate(602,122)"><rect x="0.5" y="0.5" width="13" height="11" fill="#fff" stroke="#4a7ed0"/><rect x="0.5" y="0.5" width="13" height="2" fill="#8ab0e8"/><path d="M1 6.5 H13" stroke="#4a7ed0"/><path d="M9 9 V7 Q11.5 4 14 7 V9" stroke="#9a9a9a" stroke-width="1.5" fill="none"/><rect x="8" y="9" width="8" height="7" fill="#f1b73a" stroke="#d88a1a" stroke-width="0.6"/></g><g transform="translate(632,122)"><path d="M0 2.5 H9 M0 4.5 H9 M0 7.5 H6" stroke="#1a1a1a" stroke-width="1.2"/><rect x="0" y="11" width="10" height="2.5" fill="#5a9ae6"/><path d="M8 7.5 H15.5 V12 H12" stroke="#3a7ad6" stroke-width="1" fill="none"/><path d="M10 12 L13 9.5 V14.5 Z" fill="#3a7ad6"/></g><g transform="translate(659,122)"><path d="M4 2 H8 V15 M6.5 2 V15" stroke="#5a9ae6" stroke-width="1.6"/><circle cx="3" cy="5" r="2.8" fill="#5a9ae6"/></g><g transform="translate(679,122)"><rect x="-2.5" y="-2.5" width="23" height="22" fill="#dceafb" stroke="#30a0e0" stroke-width="1.2"/><g fill="#0010ff"><rect x="3" y="2" width="4" height="1"/><rect x="9" y="2" width="7" height="1"/><rect x="9" y="4" width="3" height="1"/><rect x="9" y="6" width="7" height="2"/><rect x="9" y="9" width="5" height="2"/><rect x="3" y="12" width="4" height="1"/><rect x="9" y="12" width="7" height="1"/><rect x="3" y="14" width="3" height="1"/><rect x="9" y="14" width="2" height="1"/><rect x="9" y="16" width="1" height="1"/></g><g fill="#ff2020"><rect x="5" y="4" width="1" height="1"/><rect x="5" y="6" width="1" height="1"/><rect x="5" y="8" width="1" height="1"/><rect x="5" y="10" width="1" height="1"/></g></g><g transform="translate(702,122)"><rect x="0.5" y="0.5" width="14" height="12" rx="1" fill="#fff" stroke="#5a86c8"/><rect x="0.5" y="0.5" width="14" height="2" fill="#8ab0e0"/><path d="M6 4 H12 L9 8 H11 L5 14 L7 9 H4 Z" fill="#f2c644"/></g><g transform="translate(725,122)"><rect x="0.5" y="0.5" width="15" height="15" rx="1" fill="#d8e070" stroke="#444a6a"/><rect x="8" y="1" width="7" height="6" fill="#9ac8f0"/><rect x="1" y="9" width="14" height="6" fill="#88c070"/><path d="M3 1 L12 15 M7 15 L15 9" stroke="#e04a2a" stroke-width="1.2"/></g><g transform="translate(748,122)"><path d="M2.5 0.5 H11 L15.5 5 V15.5 H2.5 Z" fill="#fff" stroke="#777"/><path d="M0 13 L10 2" stroke="#e02020" stroke-width="2.5"/><path d="M12 7 V9 M12 11 V13" stroke="#7ab07a"/></g><g transform="translate(771,122)"><path d="M0.5 2.5 H6 L7 4.5 H14.5 V14.5 H0.5 Z" fill="#f8e0e0" stroke="#d88080"/><rect x="1" y="8" width="13" height="6" fill="#eeb0b0"/></g><g transform="translate(794,122)"><path d="M0 8 Q8 0 16 8 Q8 16 0 8 Z" fill="#fff" stroke="#e8a060" stroke-width="0.8"/><circle cx="8" cy="8" r="3.5" fill="#6a9ee0"/><circle cx="8" cy="7.5" r="1.3" fill="#111"/><path d="M4 4 Q8 2 12 4" stroke="#999" stroke-width="1.2" fill="none"/></g><g transform="translate(826,123)"><rect x="0.75" y="0.75" width="11.5" height="11.5" fill="#fafafa" stroke="#777" stroke-width="1.5"/><circle cx="6.5" cy="6.5" r="3.4" fill="#cc0000"/></g><g transform="translate(849,123)"><rect x="0.75" y="0.75" width="11.5" height="11.5" fill="#fafafa" stroke="#aaa" stroke-width="1.5"/><rect x="3.5" y="3.5" width="6" height="6" fill="#9a9a9a"/></g><g transform="translate(872,123)"><rect x="0.75" y="0.75" width="11.5" height="11.5" fill="#fafafa" stroke="#aaa" stroke-width="1.5"/><path d="M5 2.5 L9.5 6.5 L5 10.5 Z" fill="#9a9a9a"/></g><g transform="translate(895,123)"><rect x="0.75" y="0.75" width="11.5" height="11.5" fill="#fafafa" stroke="#777" stroke-width="1.5"/><path d="M2 2.5 L6.5 6.5 L2 10.5 Z M6 2.5 L10.5 6.5 L6 10.5 Z" fill="#3a7ae0"/></g><g transform="translate(917,122)"><rect x="0" y="0" width="14" height="13" fill="#9a9a9a"/><rect x="6" y="7" width="10" height="9" fill="#9a9a9a" stroke="#f0f0f0" stroke-width="0.6"/><path d="M2 3 H12 M2 6 H4 M2 8 H4 M2 10 H4" stroke="#eee"/><rect x="9" y="9" width="5" height="3" fill="#eee"/></g><rect x="329" y="119" width="1" height="22" fill="#a0a0a0"/><rect x="406" y="119" width="1" height="22" fill="#a0a0a0"/><rect x="460" y="119" width="1" height="22" fill="#a0a0a0"/><rect x="514" y="119" width="1" height="22" fill="#a0a0a0"/><rect x="568" y="119" width="1" height="22" fill="#a0a0a0"/><rect x="622" y="119" width="1" height="22" fill="#a0a0a0"/><rect x="814" y="119" width="1" height="22" fill="#a0a0a0"/><g transform="translate(172,152)"><rect x="0.5" y="0.5" width="12" height="12" rx="1" fill="#5a9cf0" stroke="#2f78d8"/><rect x="2.5" y="1" width="8" height="4.5" fill="#a8d0ff"/><rect x="3.5" y="1.5" width="1.2" height="3" fill="#3a80e0"/><rect x="2.5" y="8.5" width="8" height="3.5" fill="#eaf4ff"/><rect x="3" y="9.5" width="7" height="1.5" fill="#7cc096"/></g><g transform="translate(239,153)"><rect x="0" y="0" width="11" height="10" fill="#a85a7a"/><path d="M2.5 2 L8.5 8 M8.5 2 L2.5 8" stroke="#fff" stroke-width="1.6"/></g><g transform="translate(259,152)"><rect x="0.5" y="0.5" width="12" height="12" rx="1" fill="#5a9cf0" stroke="#2f78d8"/><rect x="2.5" y="1" width="8" height="4.5" fill="#a8d0ff"/><rect x="3.5" y="1.5" width="1.2" height="3" fill="#3a80e0"/><rect x="2.5" y="8.5" width="8" height="3.5" fill="#eaf4ff"/><rect x="3" y="9.5" width="7" height="1.5" fill="#7cc096"/></g><g transform="translate(326,153)"><rect x="0" y="0" width="11" height="10" fill="#a6a6a6"/><path d="M2.5 2 L8.5 8 M8.5 2 L2.5 8" stroke="#ececec" stroke-width="1.6"/></g><g transform="translate(345,152)"><rect x="0.5" y="0.5" width="12" height="12" rx="1" fill="#5a9cf0" stroke="#2f78d8"/><rect x="2.5" y="1" width="8" height="4.5" fill="#a8d0ff"/><rect x="3.5" y="1.5" width="1.2" height="3" fill="#3a80e0"/><rect x="2.5" y="8.5" width="8" height="3.5" fill="#eaf4ff"/><rect x="3" y="9.5" width="7" height="1.5" fill="#7cc096"/></g><g transform="translate(588,153)"><rect x="0" y="0" width="11" height="10" fill="#a6a6a6"/><path d="M2.5 2 L8.5 8 M8.5 2 L2.5 8" stroke="#ececec" stroke-width="1.6"/></g><g transform="translate(607,152)"><rect x="0.5" y="0.5" width="12" height="12" rx="1" fill="#5a9cf0" stroke="#2f78d8"/><rect x="2.5" y="1" width="8" height="4.5" fill="#a8d0ff"/><rect x="3.5" y="1.5" width="1.2" height="3" fill="#3a80e0"/><rect x="2.5" y="8.5" width="8" height="3.5" fill="#eaf4ff"/><rect x="3" y="9.5" width="7" height="1.5" fill="#7cc096"/></g><g transform="translate(672,153)"><rect x="0" y="0" width="11" height="10" fill="#a6a6a6"/><path d="M2.5 2 L8.5 8 M8.5 2 L2.5 8" stroke="#ececec" stroke-width="1.6"/></g><g transform="translate(691,152)"><rect x="0.5" y="0.5" width="12" height="12" rx="1" fill="#5a9cf0" stroke="#2f78d8"/><rect x="2.5" y="1" width="8" height="4.5" fill="#a8d0ff"/><rect x="3.5" y="1.5" width="1.2" height="3" fill="#3a80e0"/><rect x="2.5" y="8.5" width="8" height="3.5" fill="#eaf4ff"/><rect x="3" y="9.5" width="7" height="1.5" fill="#7cc096"/></g><g transform="translate(934,153)"><rect x="0" y="0" width="11" height="10" fill="#a6a6a6"/><path d="M2.5 2 L8.5 8 M8.5 2 L2.5 8" stroke="#ececec" stroke-width="1.6"/></g><g transform="translate(953,152)"><rect x="0.5" y="0.5" width="12" height="12" rx="1" fill="#5a9cf0" stroke="#2f78d8"/><rect x="2.5" y="1" width="8" height="4.5" fill="#a8d0ff"/><rect x="3.5" y="1.5" width="1.2" height="3" fill="#3a80e0"/><rect x="2.5" y="8.5" width="8" height="3.5" fill="#eaf4ff"/><rect x="3" y="9.5" width="7" height="1.5" fill="#7cc096"/></g><g transform="translate(1060,153)"><rect x="0" y="0" width="11" height="10" fill="#a6a6a6"/><path d="M2.5 2 L8.5 8 M8.5 2 L2.5 8" stroke="#ececec" stroke-width="1.6"/></g><g transform="translate(1079,152)"><rect x="0.5" y="0.5" width="12" height="12" rx="1" fill="#5a9cf0" stroke="#2f78d8"/><rect x="2.5" y="1" width="8" height="4.5" fill="#a8d0ff"/><rect x="3.5" y="1.5" width="1.2" height="3" fill="#3a80e0"/><rect x="2.5" y="8.5" width="8" height="3.5" fill="#eaf4ff"/><rect x="3" y="9.5" width="7" height="1.5" fill="#7cc096"/></g><g transform="translate(1158,153)"><rect x="0" y="0" width="11" height="10" fill="#a6a6a6"/><path d="M2.5 2 L8.5 8 M8.5 2 L2.5 8" stroke="#ececec" stroke-width="1.6"/></g><g transform="translate(1177,152)"><rect x="0.5" y="0.5" width="12" height="12" rx="1" fill="#5a9cf0" stroke="#2f78d8"/><rect x="2.5" y="1" width="8" height="4.5" fill="#a8d0ff"/><rect x="3.5" y="1.5" width="1.2" height="3" fill="#3a80e0"/><rect x="2.5" y="8.5" width="8" height="3.5" fill="#eaf4ff"/><rect x="3" y="9.5" width="7" height="1.5" fill="#7cc096"/></g><path d="M1227 154.5 L1222.5 158 L1227 161.5" stroke="#000" stroke-width="1.8" fill="none"/><path d="M1239.5 154.5 L1244 158 L1239.5 161.5" stroke="#000" stroke-width="1.8" fill="none"/><path d="M1233.5 183 L1237.5 179 L1241.5 183" stroke="#606060" stroke-width="1.4" fill="none"/><path d="M1233.5 722 L1237.5 726 L1241.5 722" stroke="#606060" stroke-width="1.4" fill="none"/><rect x="220.5" y="639.5" width="9" height="9" fill="#fff" stroke="#ff0000"/><path d="M222.5 644 H227.5" stroke="#ff0000"/><g fill="#b8b8b8"><rect x="1244" y="751" width="1.5" height="1.5"/><rect x="1244" y="754" width="1.5" height="1.5"/><rect x="1244" y="757" width="1.5" height="1.5"/><rect x="1241" y="754" width="1.5" height="1.5"/><rect x="1241" y="757" width="1.5" height="1.5"/><rect x="1238" y="757" width="1.5" height="1.5"/></g><g transform="translate(1321,7)"><path d="M0 3.5 L11 2 L11 12 L0 12 Z M12.5 1.8 L27 0 L27 12 L12.5 12 Z M0 13.5 L11 13.5 L11 23.5 L0 22 Z M12.5 13.5 L27 13.5 L27 25.5 L12.5 23.7 Z" fill="#fff"/></g><g><path d="M1316 59 L1327 59 L1329 56 L1346 56 L1346 79 L1316 79 Z" fill="#e8c060" stroke="#c89830" stroke-width="0.8"/><rect x="1318" y="52" width="8" height="5" fill="#fff" stroke="#ccc" stroke-width="0.5"/><rect x="1319" y="52.5" width="3" height="2" fill="#2a2"/><rect x="1329" y="54" width="8" height="4" fill="#fff"/><rect x="1330" y="55" width="3" height="2" fill="#d22"/><rect x="1336" y="55" width="8" height="4" fill="#fff"/><rect x="1339" y="56" width="3" height="1.5" fill="#28d"/><path d="M1316 63 L1346 63 L1346 79 L1316 79 Z" fill="#f4dc88"/><path d="M1322 80 V69 H1341 V80 H1337 V73 H1326 V80 Z" fill="#7ac0ee" stroke="#3a8ad0" stroke-width="0.8"/></g><circle cx="1335" cy="112" r="15.3" fill="#0f9d58"/><path d="M1335.00,105.27 L1348.74,105.27 A15.3,15.3 0 0 0 1322.30,103.47 L1329.17,115.37 A6.73,6.73 0 0 1 1335.00,105.27 Z" fill="#db4437"/><path d="M1335.00,105.27 L1348.74,105.27 A15.3,15.3 0 0 0 1322.30,103.47 L1329.17,115.37 A6.73,6.73 0 0 1 1335.00,105.27 Z" fill="#f4c20d" transform="rotate(120 1335 112)"/><path d="M1335.00,105.27 L1348.74,105.27 A15.3,15.3 0 0 0 1322.30,103.47 L1329.17,115.37 A6.73,6.73 0 0 1 1335.00,105.27 Z" fill="#0f9d58" transform="rotate(240 1335 112)"/><circle cx="1335" cy="112" r="6.73" fill="#fff"/><circle cx="1335" cy="112" r="5.43" fill="#4285f4"/><g><path d="M1320 153 L1328 150 L1328 175 L1321 177 Z" fill="#e8e8e8" stroke="#888" stroke-width="0.6"/><rect x="1321.5" y="156" width="1.5" height="1.5" fill="#4c4"/><path d="M1327 148 L1350 145 L1350 169 L1327 171 Z" fill="#c8ccd0" stroke="#777" stroke-width="0.8"/><path d="M1329 150 L1348 147.5 L1348 167 L1329 169 Z" fill="#eaf2fa"/><path d="M1330 162 L1334 161 L1336 153 L1338 163 L1341 156 L1343 161 L1347 160" stroke="#2a6ad0" stroke-width="1" fill="none"/><path d="M1336 171 L1342 170 L1343 174 L1335 175 Z" fill="#bbb"/><ellipse cx="1340" cy="176" rx="8" ry="2.6" fill="#e0e0e0" stroke="#888" stroke-width="0.6"/></g><defs><linearGradient id="npg" x1="0" y1="0" x2="0" y2="1"><stop offset="0" stop-color="#e4f4a0"/><stop offset="0.35" stop-color="#a8d850"/><stop offset="1" stop-color="#1e9a1e"/></linearGradient></defs><g><path d="M1320.5 192.5 H1336 L1340 196.5 V223.5 H1320.5 Z" fill="#fff" stroke="#555"/><rect x="1321.5" y="201" width="18" height="22" fill="url(#npg)"/><path d="M1322 194.5 H1335" stroke="#888" stroke-dasharray="1 1"/><path d="M1324.5 212 V201 Q1324.5 199 1326.5 199 Q1328.5 199 1328.5 201 V212" stroke="#111" stroke-width="1.3" fill="none"/><path d="M1330 201.5 H1334 M1332 199.5 V203.5 M1334.5 201.5 H1338.5 M1336.5 199.5 V203.5" stroke="#111" stroke-width="1"/><path d="M1333 219 L1345.5 195" stroke="#f0a818" stroke-width="3.2"/><path d="M1333 219 L1345.5 195" stroke="#c07010" stroke-width="0.6"/><circle cx="1346.5" cy="193" r="1.7" fill="#b00"/></g><path d="M1319 626.5 L1315 630 L1319 633.5 Z" fill="#000"/><path d="M1313.5 645.5 V661.5" stroke="#1a1a1a" stroke-width="2.6"/><path d="M1313.5 646.5 V660.5" stroke="#fff" stroke-width="1"/><path d="M1314.5 647 Q1318 645 1321 647.5 Q1324 650 1328 648.5 L1326 653.5 Q1322 655.5 1319 653.5 Q1316.5 652 1314.5 653.5 Z" fill="#fff" stroke="#1a1a1a" stroke-width="0.9"/><g stroke="#1a1a1a" stroke-width="0.9"><circle cx="1339.5" cy="649.5" r="2.6" fill="#fff"/><rect x="1338.5" y="652" width="2" height="6" fill="#fff"/><rect x="1342.5" y="648.5" width="9" height="8" fill="#fff"/><rect x="1344.5" y="650.5" width="5" height="4" fill="#69c8ea"/><rect x="1343.5" y="658.5" width="7" height="1.5" fill="#fff"/></g><path d="M1312.5 674.5 H1315.5 L1320 670.5 V685.5 L1315.5 681.5 H1312.5 Z" fill="#fff" stroke="#1a1a1a" stroke-width="0.9"/><circle cx="1323.5" cy="681.5" r="4.3" fill="#e02020" stroke="#fff" stroke-width="0.8"/><path d="M1321.7 679.7 L1325.3 683.3 M1325.3 679.7 L1321.7 683.3" stroke="#fff" stroke-width="1.2"/></svg>
<div style="position:absolute;left:916px;top:688px;white-space:pre;font-size:19.8px;line-height:24px;color:rgba(140,140,140,0.55)">Activate Windows</div>
<div style="position:absolute;left:916px;top:714px;white-space:pre;font-size:14.6px;line-height:18px;color:rgba(140,140,140,0.55)">Go to System in Control Panel to activate Windows.</div>
</body></html>
